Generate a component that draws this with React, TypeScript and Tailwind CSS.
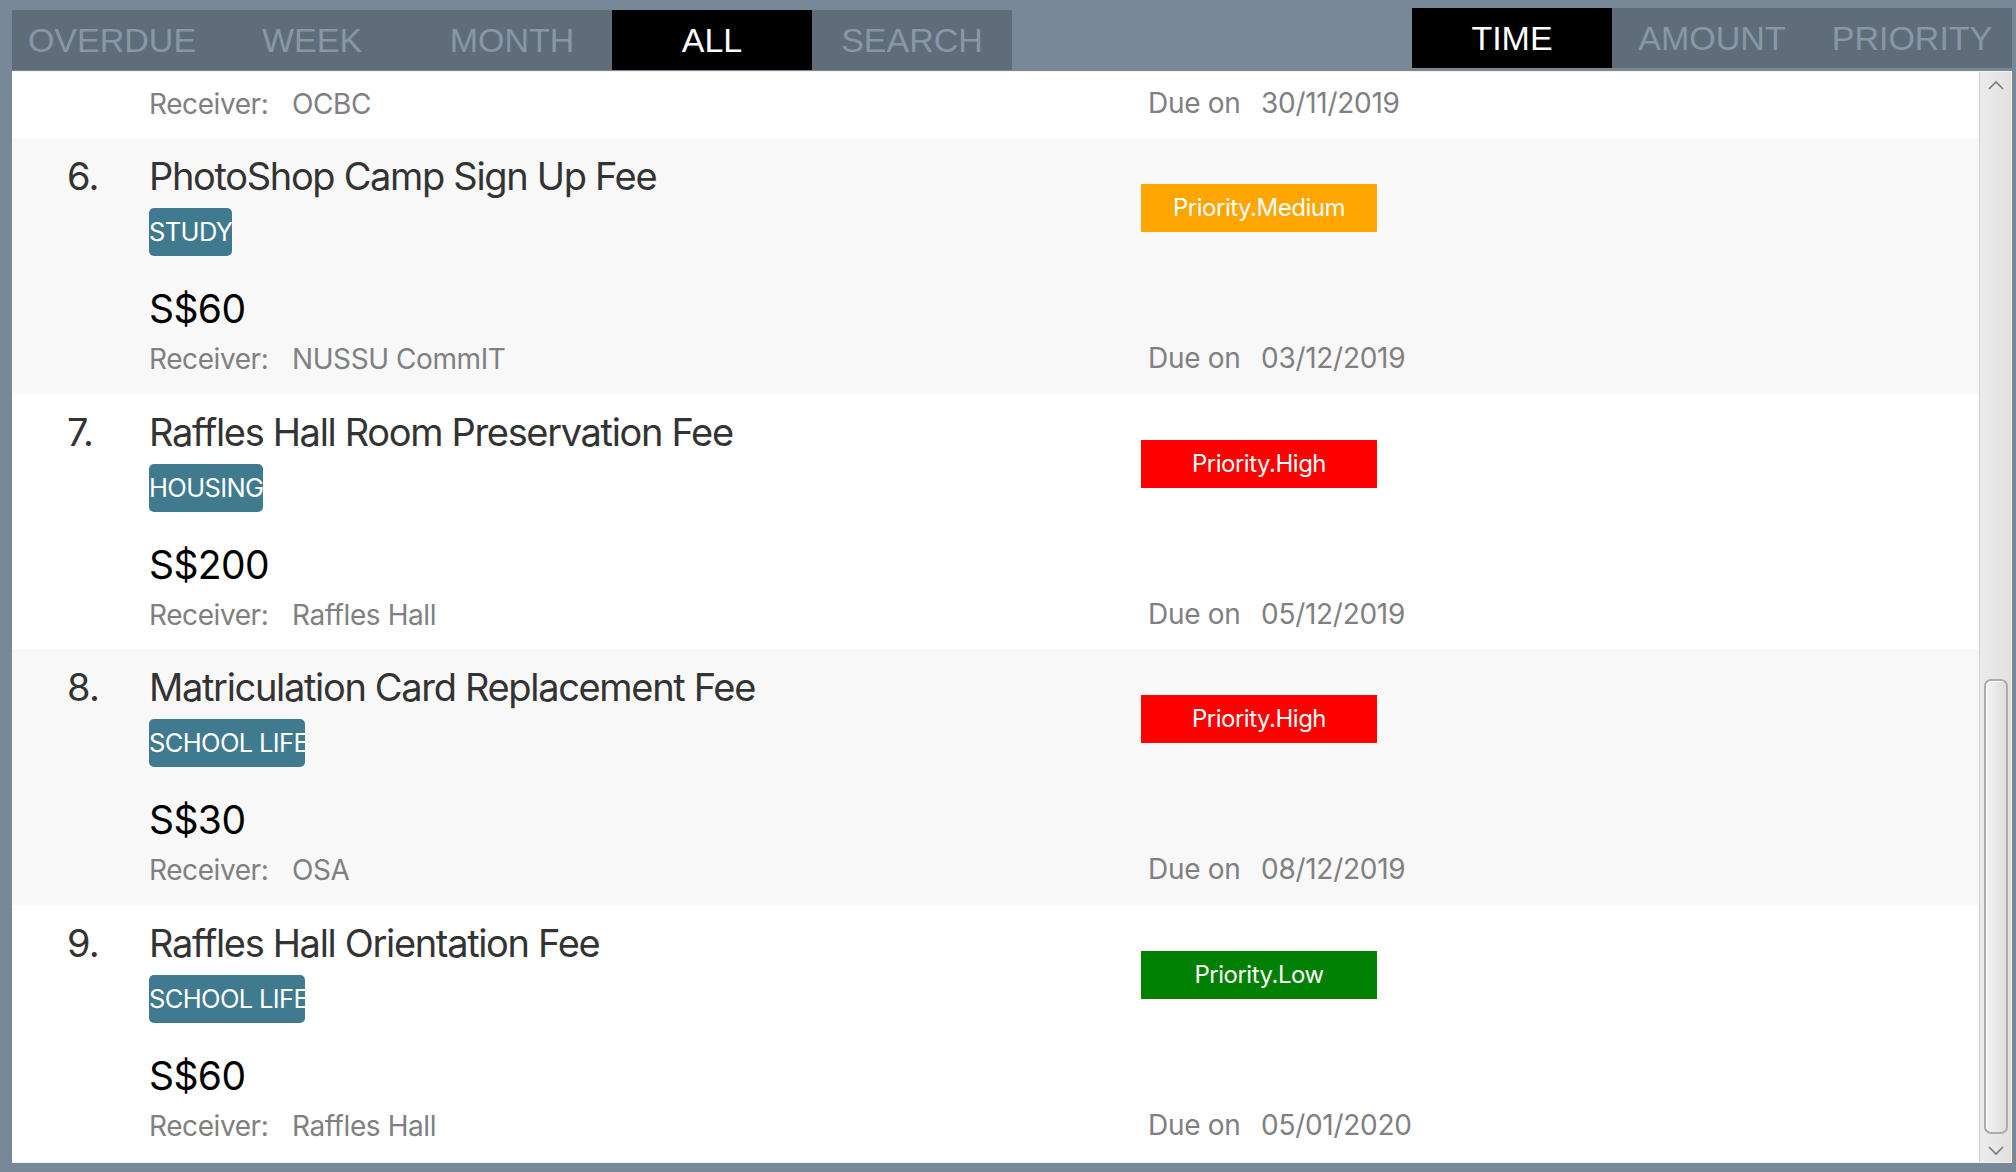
const leftTabs = ['OVERDUE', 'WEEK', 'MONTH', 'ALL', 'SEARCH'];
const rightTabs = ['TIME', 'AMOUNT', 'PRIORITY'];

type Item = {
  no: number;
  title: string;
  tag: string;
  tagW: string;
  amount: string;
  receiver: string;
  due: string;
  priority: 'Low' | 'Medium' | 'High';
};

// row 5 is scrolled mostly out of view, only its receiver line shows
const items: Item[] = [
  { no: 5, title: 'Bank Loan Repayment', tag: 'LOAN', tagW: 'w-[70px]', amount: '\u00a0', receiver: 'OCBC', due: '30/11/2019', priority: 'High' },
  { no: 6, title: 'PhotoShop Camp Sign Up Fee', tag: 'STUDY', tagW: 'w-[83px]', amount: 'S$60', receiver: 'NUSSU CommIT', due: '03/12/2019', priority: 'Medium' },
  { no: 7, title: 'Raffles Hall Room Preservation Fee', tag: 'HOUSING', tagW: 'w-[114px]', amount: 'S$200', receiver: 'Raffles Hall', due: '05/12/2019', priority: 'High' },
  { no: 8, title: 'Matriculation Card Replacement Fee', tag: 'SCHOOL LIFE', tagW: 'w-[156px]', amount: 'S$30', receiver: 'OSA', due: '08/12/2019', priority: 'High' },
  { no: 9, title: 'Raffles Hall Orientation Fee', tag: 'SCHOOL LIFE', tagW: 'w-[156px]', amount: 'S$60', receiver: 'Raffles Hall', due: '05/01/2020', priority: 'Low' },
];

const priorityBg = {
  Low: 'bg-[#008000]',
  Medium: 'bg-[#ffa500]',
  High: 'bg-[#ff0000]',
};

function Tab({ label, active }: { label: string; active?: boolean }) {
  return (
    <div
      className={
        'w-[200px] h-full flex items-center justify-center text-[34px] leading-none ' +
        (active ? 'bg-black text-white' : 'text-[#8797a8]')
      }
    >
      {label}
    </div>
  );
}

function Row({ item, shaded }: { item: Item; shaded: boolean }) {
  return (
    <div className={'h-[255.5px] flex pl-[55px] ' + (shaded ? 'bg-[#f8f8f8]' : 'bg-white')}>
      <div className="w-[82px] pt-[19px] text-[38px] leading-[38px] tracking-[-0.02em] text-[#333333]">{item.no}.</div>
      <div className="w-[992px] flex flex-col items-start">
        <div className="pt-[19px] text-[38px] leading-[38px] tracking-[-0.035em] text-[#333333] whitespace-nowrap">
          {item.title}
        </div>
        <div
          className={
            'mt-[13px] h-[48px] rounded-[5px] bg-[#3f7a8e] text-white text-[25.5px] leading-[48px] tracking-[-0.025em] overflow-hidden whitespace-nowrap ' +
            item.tagW
          }
        >
          {item.tag}
        </div>
        <div className="mt-[33px] text-[39px] leading-[39px] tracking-[-0.015em] text-black">{item.amount}</div>
        <div className="mt-[17px] flex text-[28px] leading-[28px] tracking-[-0.015em] text-[#808080]">
          <span className="w-[143px]">Receiver:</span>
          <span>{item.receiver}</span>
        </div>
      </div>
      <div className="flex flex-col items-start">
        <div
          className={
            'mt-[46px] w-[236px] h-[48px] flex items-center justify-center text-white text-[24px] tracking-[-0.02em] ' +
            priorityBg[item.priority]
          }
        >
          Priority.{item.priority}
        </div>
        <div className="mt-[112px] ml-[7px] flex text-[28px] leading-[28px] tracking-[-0.01em] text-[#808080]">
          <span className="w-[113px]">Due on</span>
          <span>{item.due}</span>
        </div>
      </div>
    </div>
  );
}

function Chevron({ up }: { up?: boolean }) {
  return (
    <svg width="16" height="10" viewBox="0 0 16 10" className="mx-auto">
      <path
        d={up ? 'M1 9 L8 2 L15 9' : 'M1 1 L8 8 L15 1'}
        fill="none"
        stroke="#7a7a7a"
        strokeWidth="1.6"
      />
    </svg>
  );
}

export default function App() {
  return (
    <div className="w-[2016px] h-[1172px] bg-[#778899] flex flex-col overflow-hidden" style={{ fontFamily: 'Inter, "Noto Sans", sans-serif' }}>
      <div className="h-[71px] flex justify-between pl-[12px] pr-[4px] shrink-0" style={{ fontFamily: '"Liberation Sans", Arial, sans-serif' }}>
        <div className="mt-[10px] h-[60px] flex bg-[#5f6d7b]">
          {leftTabs.map((t) => (
            <Tab key={t} label={t} active={t === 'ALL'} />
          ))}
        </div>
        <div className="mt-[8px] h-[60px] flex bg-[#5f6d7b]">
          {rightTabs.map((t) => (
            <Tab key={t} label={t} active={t === 'TIME'} />
          ))}
        </div>
      </div>
      <div className="ml-[12px] mr-[4px] h-[1092px] border border-[#fbf1da] border-l-0 flex bg-white">
        <div className="flex-1 overflow-hidden">
          <div className="mt-[-189.5px]">
            {items.map((it, i) => (
              <Row key={it.no} item={it} shaded={i % 2 === 1} />
            ))}
          </div>
        </div>
        <div className="w-[32px] flex flex-col border-l border-[#cfcfcf] bg-gradient-to-r from-[#ececec] to-[#e1e1e1]">
          <div className="h-[26px] flex items-center">
            <Chevron up />
          </div>
          <div className="flex-1 flex flex-col justify-end pb-[6px]">
            <div className="mx-auto w-[24px] h-[455px] rounded-[7px] border-2 border-[#acacac] bg-gradient-to-r from-[#f4f4f4] to-[#dedede] shadow-[inset_1px_1px_0_#ffffff]" />
          </div>
          <div className="h-[22px] flex items-center">
            <Chevron />
          </div>
        </div>
      </div>
    </div>
  );
}
